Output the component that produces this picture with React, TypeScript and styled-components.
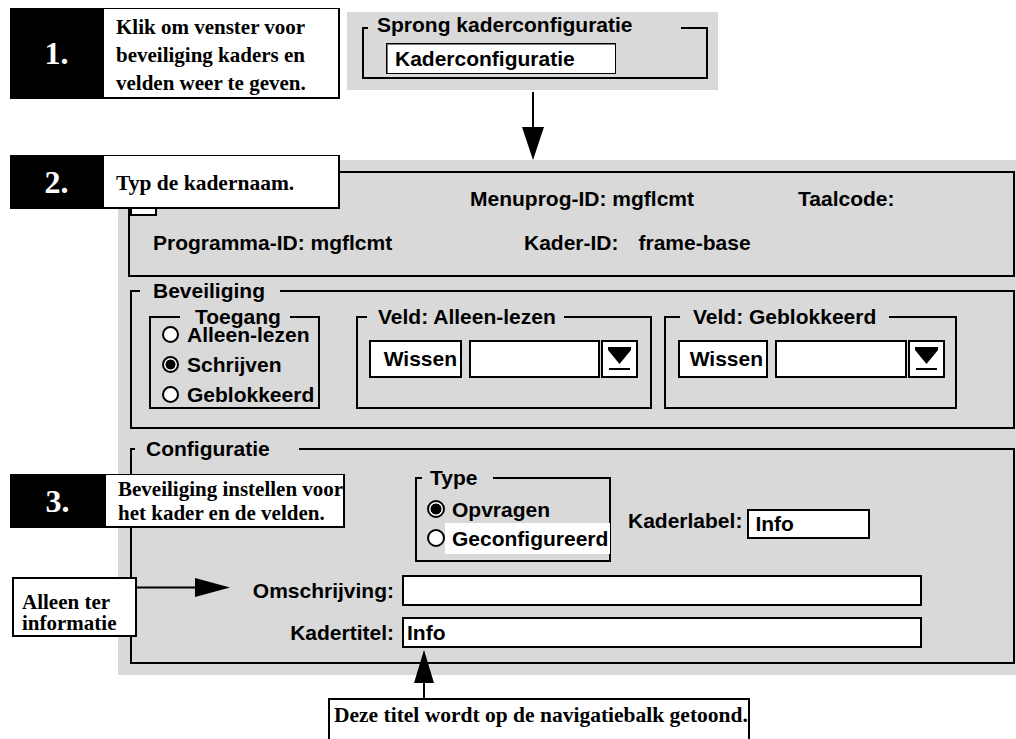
import React from "react";
import type { ReactNode } from "react";
import styled, { createGlobalStyle, css } from "styled-components";

const sans = `"Liberation Sans", Arial, sans-serif`;
const serif = `"Liberation Serif", "Times New Roman", serif`;

const GlobalStyle = createGlobalStyle`
  html, body {
    margin: 0;
    padding: 0;
    background: #fff;
  }
`;

// the old screen uses a 1px grey/white dither; a flat mid tone reads the same
const dither = css`
  background-color: #d9d9d9;
`;

const Page = styled.div`
  position: relative;
  width: 1016px;
  height: 739px;
  overflow: hidden;
  background: #fff;
  color: #000;
  font-family: ${sans};
  font-size: 21px;
  font-weight: bold;
`;

/* ---------- callouts ---------- */

const Callout = styled.div<{ $width: number; $height: number }>`
  display: flex;
  width: ${(p) => p.$width}px;
  height: ${(p) => p.$height}px;
`;

const Pinned = styled.div<{ $x: number; $y: number }>`
  position: absolute;
  left: ${(p) => p.$x}px;
  top: ${(p) => p.$y}px;
  z-index: 2;
`;

const StepNumber = styled.div<{ $width: number }>`
  flex: 0 0 ${(p) => p.$width}px;
  display: flex;
  align-items: center;
  justify-content: center;
  background: #000;
  color: #fff;
  font-family: ${serif};
  font-size: 32px;
  font-weight: bold;
`;

const CalloutText = styled.div<{ $lineHeight: number; $size: number; $shift: number }>`
  flex: 1;
  display: flex;
  align-items: center;
  box-sizing: border-box;
  padding: ${(p) => p.$shift}px 0 0 12px;
  background: #fff;
  border: 1px solid #000;
  border-right-width: 2px;
  border-bottom-width: 2px;
  font-family: ${serif};
  font-size: ${(p) => p.$size}px;
  line-height: ${(p) => p.$lineHeight}px;
  white-space: nowrap;
`;

const Note = styled.div`
  box-sizing: border-box;
  width: 125px;
  height: 60px;
  padding: 13px 0 0 8px;
  background: #fff;
  border: 2px solid #000;
  font-family: ${serif};
  font-size: 21px;
  line-height: 21px;
`;

const NoteArrow = styled.svg`
  position: absolute;
  left: 125px;
  top: 1px;
`;

const BottomNote = styled.div`
  position: relative;
  box-sizing: border-box;
  width: 422px;
  height: 60px;
  margin: 23px 0 0 328px;
  padding: 5px 0 0 4px;
  background: #fff;
  border: 2px solid #000;
  font-family: ${serif};
  font-size: 21.5px;
  line-height: 20px;
  white-space: nowrap;
`;

const UpArrow = styled.svg`
  position: absolute;
  left: 83px;
  top: -50px;
`;

/* ---------- top: jump panel ---------- */

const TopRow = styled.div`
  display: flex;
  align-items: flex-start;
  padding: 8px 0 0 10px;
`;

const JumpColumn = styled.div`
  display: flex;
  flex-direction: column;
  margin: 4px 0 0 7px;
`;

const JumpPanel = styled.div`
  ${dither};
  box-sizing: border-box;
  width: 371px;
  height: 78px;
  padding: 10px 10px 0 15px;
`;

const DownArrow = styled.svg`
  display: block;
  margin: 2px 0 0 174px;
`;

/* ---------- group boxes ---------- */

const GroupBox = styled.fieldset<{ $width?: number }>`
  margin: 0;
  padding: 0;
  min-width: 0;
  box-sizing: border-box;
  width: ${(p) => (p.$width ? `${p.$width}px` : "auto")};
  border: 2px solid #000;
`;

const Legend = styled.legend<{ $indent: number; $padL: number; $padR: number; $raise?: number }>`
  margin-left: ${(p) => p.$indent}px;
  padding: 0 ${(p) => p.$padR}px 0 ${(p) => p.$padL}px;
  font-size: 21px;
  line-height: 12px;
  white-space: nowrap;

  & > span {
    display: inline-block;
    transform: translateY(${(p) => -(p.$raise ?? 0)}px);
  }
`;

const GroupBody = styled.div<{ $pad: string }>`
  padding: ${(p) => p.$pad};
`;

/* ---------- main window ---------- */

const MainPanel = styled.section`
  ${dither};
  box-sizing: border-box;
  width: 898px;
  height: 515px;
  margin-left: 118px;
  padding: 11px 0 0 10px;
  display: flex;
  flex-direction: column;
  align-items: flex-start;
`;

const HeaderBox = styled.div`
  box-sizing: border-box;
  width: 887px;
  height: 106px;
  border: 2px solid #000;
  padding-top: 14px;
`;

const InfoRow = styled.div<{ $columns: string; $indent?: number; $top?: number }>`
  display: grid;
  grid-template-columns: ${(p) => p.$columns};
  align-items: start;
  height: 24px;
  line-height: 24px;
  padding-left: ${(p) => p.$indent ?? 0}px;
  margin-top: ${(p) => p.$top ?? 0}px;
  white-space: nowrap;
`;

const InfoValue = styled.span`
  margin-left: 20px;
`;

const NameField = styled.div`
  width: 27px;
  height: 28px;
  margin-top: 1px;
  box-sizing: border-box;
  background: #fff;
  border: 2px solid #000;
`;

const Section = styled(GroupBox)<{ $top: number }>`
  margin: ${(p) => p.$top}px 0 0 2px;
`;

const Row = styled.div<{ $left?: number; $top?: number }>`
  display: flex;
  align-items: flex-start;
  margin: ${(p) => p.$top ?? 0}px 0 0 ${(p) => p.$left ?? 0}px;
`;

const Spaced = styled.div<{ $left: number }>`
  margin-left: ${(p) => p.$left}px;
`;

/* ---------- radios ---------- */

const RadioList = styled.div<{ $top: number; $gap: number }>`
  display: flex;
  flex-direction: column;
  gap: ${(p) => p.$gap}px;
  margin-top: ${(p) => p.$top}px;
`;

const RadioRow = styled.div<{ $left: number; $height: number }>`
  display: flex;
  align-items: center;
  height: ${(p) => p.$height}px;
  padding-left: ${(p) => p.$left}px;
  white-space: nowrap;
`;

const RadioDot = styled.span<{ $checked?: boolean; $size: number }>`
  flex: 0 0 auto;
  box-sizing: border-box;
  width: ${(p) => p.$size}px;
  height: ${(p) => p.$size}px;
  border: 2px solid #000;
  border-radius: 50%;
  background: ${(p) =>
    p.$checked
      ? `radial-gradient(circle, #000 0 ${p.$size / 2 - 3.8}px, #fff ${p.$size / 2 - 3.2}px)`
      : "#fff"};
`;

const RadioLabel = styled.span<{ $pad: number; $highlight?: boolean }>`
  padding: 0 2px 0 ${(p) => p.$pad}px;
  line-height: 31px;
  background: ${(p) => (p.$highlight ? "#fff" : "transparent")};
`;

/* ---------- controls ---------- */

const PushButton = styled.div<{ $width: number }>`
  box-sizing: border-box;
  width: ${(p) => p.$width}px;
  height: 38px;
  padding-right: 3px;
  background: #fff;
  border: 2px solid #000;
  text-align: right;
  line-height: 34px;
`;

const TextField = styled.div<{ $width: number; $height: number; $gap?: number; $pad?: number }>`
  box-sizing: border-box;
  width: ${(p) => p.$width}px;
  height: ${(p) => p.$height}px;
  margin-left: ${(p) => p.$gap ?? 0}px;
  padding-left: ${(p) => p.$pad ?? 4}px;
  background: #fff;
  border: 2px solid #000;
  line-height: ${(p) => p.$height - 4}px;
  white-space: nowrap;
`;

const DropButton = styled.div`
  box-sizing: border-box;
  width: 37px;
  height: 38px;
  margin-left: 1px;
  display: flex;
  align-items: center;
  justify-content: center;
  background: #fff;
  border: 2px solid #000;
`;

const JumpButton = styled.div`
  box-sizing: border-box;
  width: 230px;
  height: 31px;
  margin: 9px 0 3px 22px;
  padding-left: 8px;
  background: #fff;
  border: 1px solid #000;
  box-shadow: inset 1px 1px 0 #7a7a7a;
  line-height: 29px;
`;

const FieldLabel = styled.span`
  white-space: nowrap;
`;

const FieldGrid = styled.div`
  display: grid;
  grid-template-columns: 262px 520px;
  grid-auto-rows: 31px;
  column-gap: 8px;
  row-gap: 11px;
  align-items: center;
  margin-top: 13px;

  & > ${FieldLabel} {
    text-align: right;
  }
`;

/* ---------- drawings ---------- */

const DropIcon = () => (
  <svg width="25" height="26" viewBox="0 0 25 26">
    <polygon points="1,1 24,1 24,4 12.5,18 1,4" fill="#000" />
    <rect x="2" y="22" width="21" height="2" fill="#000" />
  </svg>
);

type Radio = { label: string; checked?: boolean; highlight?: boolean };

const RadioGroup = ({
  items,
  size,
  left,
  pad,
  top,
  gap,
  height,
}: {
  items: Radio[];
  size: number;
  left: number;
  pad: number;
  top: number;
  gap: number;
  height: number;
}) => (
  <RadioList $top={top} $gap={gap}>
    {items.map((it) => (
      <RadioRow key={it.label} $left={left} $height={height}>
        <RadioDot $checked={it.checked} $size={size} />
        <RadioLabel $pad={pad} $highlight={it.highlight}>
          {it.label}
        </RadioLabel>
      </RadioRow>
    ))}
  </RadioList>
);

const FieldControls = ({
  left,
  button,
  field,
}: {
  left: number;
  button: number;
  field: number;
}) => (
  <GroupBody $pad={`17px 0 29px ${left}px`}>
    <Row>
      <PushButton $width={button}>Wissen</PushButton>
      <TextField $width={field} $height={38} $gap={7} />
      <DropButton>
        <DropIcon />
      </DropButton>
    </Row>
  </GroupBody>
);

const Step = ({
  n,
  width,
  height,
  numWidth,
  lineHeight,
  size = 21,
  shift = 0,
  children,
}: {
  n: string;
  width: number;
  height: number;
  numWidth: number;
  lineHeight: number;
  size?: number;
  shift?: number;
  children: ReactNode;
}) => (
  <Callout $width={width} $height={height}>
    <StepNumber $width={numWidth}>{n}</StepNumber>
    <CalloutText $lineHeight={lineHeight} $size={size} $shift={shift}>
      <div>{children}</div>
    </CalloutText>
  </Callout>
);

export default function App() {
  return (
    <Page>
      <GlobalStyle />

      <TopRow>
        <Step n="1." width={330} height={91} numWidth={93} lineHeight={28} shift={3}>
          Klik om venster voor
          <br />
          beveiliging kaders en
          <br />
          velden weer te geven.
        </Step>

        <JumpColumn>
          <JumpPanel>
            <GroupBox $width={346}>
              <Legend $indent={4} $padL={9} $padR={48} $raise={3}>
                <span>Sprong kaderconfiguratie</span>
              </Legend>
              <JumpButton>Kaderconfiguratie</JumpButton>
            </GroupBox>
          </JumpPanel>
          <DownArrow width="24" height="68" viewBox="0 0 24 68">
            <line x1="12" y1="0" x2="12" y2="36" stroke="#000" strokeWidth="2" />
            <polygon points="1,35 23,35 12,68" fill="#000" />
          </DownArrow>
        </JumpColumn>
      </TopRow>

      <MainPanel>
        <HeaderBox>
          <InfoRow $columns="340px 328px auto">
            <NameField />
            <span>Menuprog-ID: mgflcmt</span>
            <span>Taalcode:</span>
          </InfoRow>
          <InfoRow $columns="371px auto" $indent={23} $top={20}>
            <span>Programma-ID: mgflcmt</span>
            <span>
              Kader-ID:<InfoValue>frame-base</InfoValue>
            </span>
          </InfoRow>
        </HeaderBox>

        <Section $width={885} $top={8}>
          <Legend $indent={8} $padL={13} $padR={15}>
            Beveiliging
          </Legend>
          <GroupBody $pad="14px 0 18px 17px">
            <Row>
              <GroupBox $width={171}>
                <Legend $indent={29} $padL={15} $padR={9}>
                  Toegang
                </Legend>
                <GroupBody $pad="0 0 2px 0">
                  <RadioGroup
                    items={[
                      { label: "Alleen-lezen" },
                      { label: "Schrijven", checked: true },
                      { label: "Geblokkeerd" },
                    ]}
                    size={17}
                    left={11}
                    pad={8}
                    top={0}
                    gap={8}
                    height={22}
                  />
                </GroupBody>
              </GroupBox>

              <Spaced $left={36}>
                <GroupBox $width={296}>
                  <Legend $indent={9} $padL={11} $padR={8}>
                    Veld: Alleen-lezen
                  </Legend>
                  <FieldControls left={11} button={93} field={131} />
                </GroupBox>
              </Spaced>

              <Spaced $left={12}>
                <GroupBox $width={293}>
                  <Legend $indent={14} $padL={13} $padR={13}>
                    Veld: Geblokkeerd
                  </Legend>
                  <FieldControls left={12} button={90} field={132} />
                </GroupBox>
              </Spaced>
            </Row>
          </GroupBody>
        </Section>

        <Section $width={885} $top={14}>
          <Legend $indent={3} $padL={11} $padR={29}>
            Configuratie
          </Legend>
          <GroupBody $pad="17px 0 14px 0">
            <Row $left={283}>
              <GroupBox $width={196}>
                <Legend $indent={5} $padL={8} $padR={16}>
                  Type
                </Legend>
                <GroupBody $pad="0 0 10px 0">
                  <RadioGroup
                    items={[
                      { label: "Opvragen", checked: true },
                      { label: "Geconfigureerd", highlight: true },
                    ]}
                    size={18}
                    left={10}
                    pad={7}
                    top={13}
                    gap={5}
                    height={24}
                  />
                </GroupBody>
              </GroupBox>
              <Row $left={17} $top={37}>
                <FieldLabel>Kaderlabel:</FieldLabel>
                <TextField $width={123} $height={30} $gap={5} $pad={6}>
                  Info
                </TextField>
              </Row>
            </Row>

            <FieldGrid>
              <FieldLabel>Omschrijving:</FieldLabel>
              <TextField $width={520} $height={31} />
              <FieldLabel>Kadertitel:</FieldLabel>
              <TextField $width={520} $height={31} $pad={3}>
                Info
              </TextField>
            </FieldGrid>
          </GroupBody>
        </Section>
      </MainPanel>

      <BottomNote>
        <UpArrow width="22" height="50" viewBox="0 0 22 50">
          <polygon points="11,0 21,33 1,33" fill="#000" />
          <line x1="11" y1="32" x2="11" y2="50" stroke="#000" strokeWidth="2" />
        </UpArrow>
        Deze titel wordt op de navigatiebalk getoond.
      </BottomNote>

      <Pinned $x={10} $y={155}>
        <Step n="2." width={330} height={54} numWidth={93} lineHeight={24} size={21.5} shift={2}>
          Typ de kadernaam.
        </Step>
      </Pinned>

      <Pinned $x={10} $y={474}>
        <Step n="3." width={335} height={54} numWidth={95} lineHeight={24}>
          Beveiliging instellen voor
          <br />
          het kader en de velden.
        </Step>
      </Pinned>

      <Pinned $x={12} $y={577}>
        <Note>
          Alleen ter
          <br />
          informatie
        </Note>
        <NoteArrow width="95" height="20" viewBox="0 0 95 20">
          <line x1="0" y1="9.5" x2="60" y2="9.5" stroke="#000" strokeWidth="2" />
          <polygon points="58,0 93,9.5 58,19" fill="#000" />
        </NoteArrow>
      </Pinned>
    </Page>
  );
}
